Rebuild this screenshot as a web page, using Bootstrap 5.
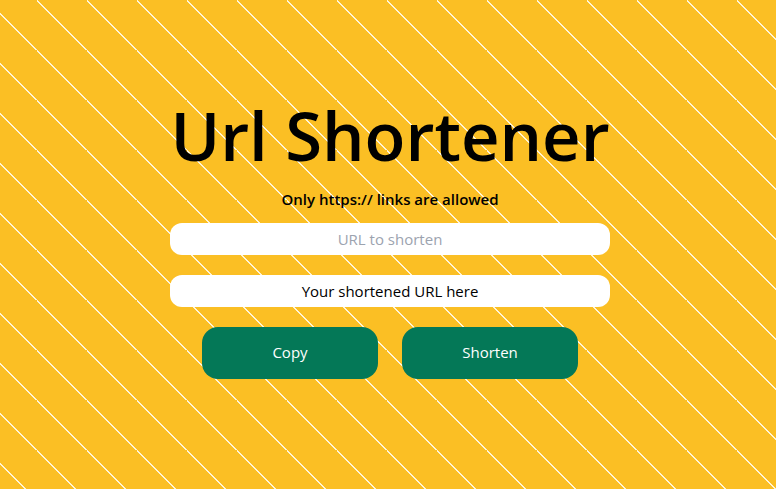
<!DOCTYPE html>
<html lang="en">
<head>
<meta charset="utf-8">
<meta name="viewport" content="width=device-width, initial-scale=1">
<title>Url Shortener</title>
<link href="https://cdn.jsdelivr.net/npm/bootstrap@5.3.0/dist/css/bootstrap.min.css" rel="stylesheet">
<style>
  body {
    color: #000;
    font-family: "Segoe UI", "Open Sans", "Noto Sans", sans-serif;
    font-size: 15px;
    line-height: 24px;
    background-color: #fbbf24;
    background-image: linear-gradient(45deg, transparent 49%, #fff4d6 49%, #fff4d6 51%, transparent 51%);
    background-size: 50px 50px;
    background-position: 37px 0;
  }
  .shortener { max-width: 440px; padding-bottom: 12px; }
  .headline { font-size: 67px; line-height: 72px; font-weight: 600; }
  .hint { font-weight: 600; }
  .field {
    height: 32px;
    border-radius: 12px;
    background: #fff;
    color: #000;
    outline-offset: 2px;
  }
  .field::placeholder { color: #9ca3af; opacity: 1; }
  .result { margin: 20px 0; }
  .btn-action {
    --bs-btn-color: #fff;
    --bs-btn-bg: #047857;
    --bs-btn-hover-color: #fff;
    --bs-btn-hover-bg: #065f46;
    --bs-btn-active-color: #fff;
    --bs-btn-active-bg: #065f46;
    --bs-btn-font-size: 15px;
    --bs-btn-border-radius: 16px;
    width: 176px;
    height: 52px;
  }
</style>
</head>
<body class="min-vh-100 d-flex align-items-center justify-content-center ps-1">
  <main class="shortener w-100 text-center">
    <h1 class="headline text-nowrap mb-3">Url Shortener</h1>
    <form>
      <label class="hint d-block mb-2 pb-1" for="url">Only https:// links are allowed</label>
      <input class="field w-100 border-0 text-center d-block" id="url" type="url" placeholder="URL to shorten">
      <input class="field result w-100 border-0 text-center d-block" type="text" value="Your shortened URL here" aria-label="Shortened URL" readonly>
      <div class="d-flex justify-content-center gap-4">
        <button class="btn btn-action border-0" type="button">Copy</button>
        <button class="btn btn-action border-0" type="submit">Shorten</button>
      </div>
    </form>
  </main>
<script src="https://cdn.jsdelivr.net/npm/bootstrap@5.3.0/dist/js/bootstrap.bundle.min.js"></script>
</body>
</html>
